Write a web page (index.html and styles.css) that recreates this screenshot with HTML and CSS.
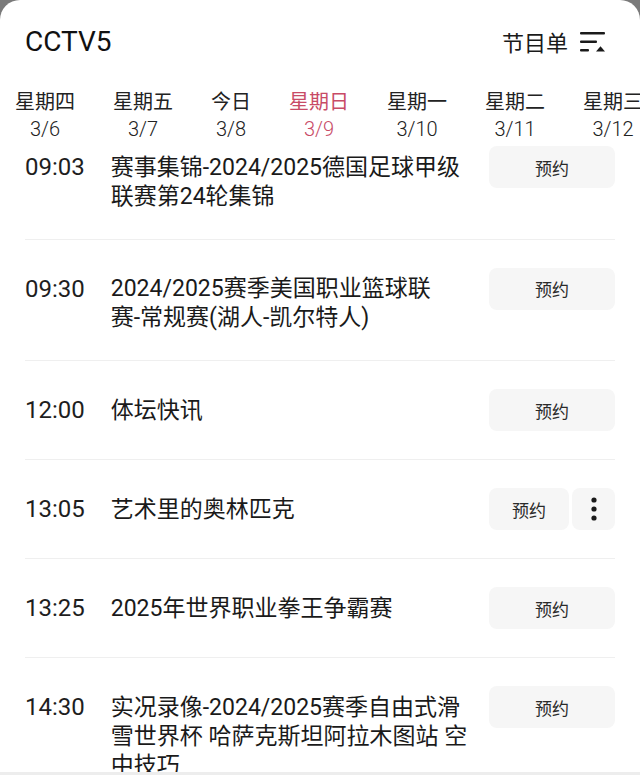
FILE: index.html
```html
<!DOCTYPE html>
<html lang="zh-CN">

<head>
    <meta charset="UTF-8">
    <meta name="viewport" content="width=device-width, initial-scale=1.0">
    <title>CCTV5 节目单</title>
    <link rel="stylesheet" href="styles.css">
</head>

<body>

    <div class="sheet">

        <div class="header">
            <h1>CCTV5</h1>
            <div class="guide">
                <span>节目单</span>
                <svg class="guide-icon" width="28" height="24" viewBox="0 0 28 24">
                    <rect x="1" y="2" width="25" height="2.6" rx="1" fill="#1a1a1a" />
                    <rect x="1" y="10.5" width="17" height="2.6" rx="1" fill="#1a1a1a" />
                    <rect x="1" y="19" width="9" height="2.6" rx="1" fill="#1a1a1a" />
                    <path d="M17 21.6 L21.5 16.2 L26 21.6 Z" fill="#1a1a1a" />
                </svg>
            </div>
        </div>

        <!-- day tabs -->
        <div class="days">
            <div class="day"><span>星期四</span><span>3/6</span></div>
            <div class="day"><span>星期五</span><span>3/7</span></div>
            <div class="day"><span>今日</span><span>3/8</span></div>
            <div class="day active"><span>星期日</span><span>3/9</span></div>
            <div class="day"><span>星期一</span><span>3/10</span></div>
            <div class="day"><span>星期二</span><span>3/11</span></div>
            <div class="day"><span>星期三</span><span>3/12</span></div>
        </div>

        <!-- programme list, scrolled a little -->
        <div class="list">
            <div class="list-inner">

                <div class="row">
                    <div class="time">09:03</div>
                    <div class="title">赛事集锦-2024/2025德国足球甲级联赛第24轮集锦</div>
                    <div class="actions"><button class="btn">预约</button></div>
                </div>

                <div class="row">
                    <div class="time">09:30</div>
                    <div class="title">2024/2025赛季美国职业篮球联<br>赛-常规赛(湖人-凯尔特人)</div>
                    <div class="actions"><button class="btn">预约</button></div>
                </div>

                <div class="row">
                    <div class="time">12:00</div>
                    <div class="title">体坛快讯</div>
                    <div class="actions"><button class="btn">预约</button></div>
                </div>

                <div class="row">
                    <div class="time">13:05</div>
                    <div class="title">艺术里的奥林匹克</div>
                    <div class="actions">
                        <button class="btn btn-short">预约</button>
                        <button class="btn btn-more">
                            <svg width="8" height="26" viewBox="0 0 8 26">
                                <circle cx="4" cy="4" r="2.6" fill="#1a1a1a" />
                                <circle cx="4" cy="13" r="2.6" fill="#1a1a1a" />
                                <circle cx="4" cy="22" r="2.6" fill="#1a1a1a" />
                            </svg>
                        </button>
                    </div>
                </div>

                <div class="row">
                    <div class="time">13:25</div>
                    <div class="title">2025年世界职业拳王争霸赛</div>
                    <div class="actions"><button class="btn">预约</button></div>
                </div>

                <div class="row">
                    <div class="time">14:30</div>
                    <div class="title">实况录像-2024/2025赛季自由式滑雪世界杯 哈萨克斯坦阿拉木图站 空中技巧</div>
                    <div class="actions"><button class="btn">预约</button></div>
                </div>

            </div>
        </div>

        <div class="bottom-bar"></div>

    </div>

</body>

</html>
```

FILE: styles.css
```css
body {
    margin: 0;
    padding: 0;
    background-color: #7a7a7a;
    font-family: Roboto, "Noto Sans CJK SC", sans-serif;
    color: #1a1a1a;
}

.sheet {
    height: 775px;
    background-color: #fff;
    border-radius: 20px 20px 0 0;
    overflow: hidden;
    display: flex;
    flex-direction: column;
}

.header {
    display: flex;
    justify-content: space-between;
    align-items: center;
    padding: 22px 33px 0 25px;
    height: 38px;
}

.header h1 {
    margin: 0;
    font-size: 28px;
    font-weight: 400;
    color: #111;
}

.guide {
    display: flex;
    align-items: center;
    gap: 11px;
    font-size: 22px;
    color: #1a1a1a;
}

.guide-icon {
    margin-top: 2px;
}

/* day tabs */
.days {
    display: flex;
    gap: 38px;
    padding-left: 15px;
    margin-top: 29px;
    white-space: nowrap;
    overflow: hidden;
}

.day {
    display: flex;
    flex-direction: column;
    align-items: center;
    flex-shrink: 0;
    font-size: 20px;
    line-height: 26px;
    color: #222;
}

.day span:last-child {
    font-weight: 300;
    padding-top: 1px;
}

.day.active {
    color: #c84b66;
}

/* list */
.list {
    flex: 1;
    overflow: hidden;
    padding: 0 25px;
}

.list-inner {
    margin-top: -24px;
}

.row {
    display: flex;
    align-items: flex-start;
    padding: 28px 0;
    border-bottom: 1px solid #efefef;
}

.time {
    font-size: 24px;
    line-height: 42px;
    font-weight: 400;
    color: #1e1e1e;
    margin-right: 26px;
}

.title {
    flex: 1;
    font-size: 23px;
    line-height: 29px;
    padding-top: 6.5px;
    margin-right: 12px;
    color: #1a1a1a;
}

.actions {
    display: flex;
    gap: 3px;
    width: 126px;
    flex-shrink: 0;
}

.btn {
    height: 42px;
    width: 126px;
    border: none;
    border-radius: 8px;
    background-color: #f6f6f6;
    font-family: inherit;
    font-size: 17px;
    color: #2a2a2a;
    padding: 0;
}

.btn-short {
    width: 80px;
}

.btn-more {
    width: 43px;
    display: flex;
    align-items: center;
    justify-content: center;
}

.bottom-bar {
    height: 3px;
    background-color: #ededed;
}
```
